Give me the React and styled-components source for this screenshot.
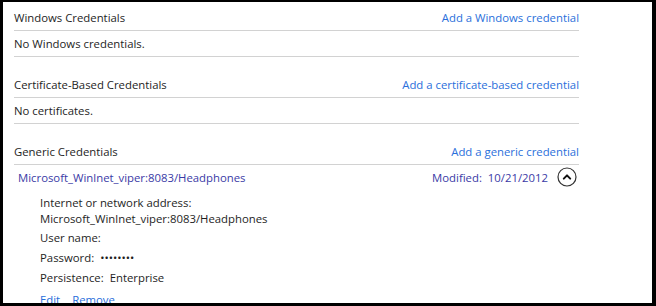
import React from 'react'
import { styled, createGlobalStyle } from 'styled-components'

const Global = createGlobalStyle`
  html, body {
    margin: 0;
    padding: 0;
    background: #000;
  }
  body {
    font-family: "Open Sans", "Noto Sans", sans-serif;
    font-size: 11.35px;
    color: #1e1e1e;
  }
`

const Frame = styled.div`
  width: 656px;
  height: 306px;
  box-sizing: border-box;
  padding: 2px 4px 3px 3px;
  background: #000;
`

const Panel = styled.div`
  height: 100%;
  background: #fff;
  overflow: hidden;
  padding: 3px 0 0 11px;
  box-sizing: border-box;
`

const Content = styled.div`
  width: 565px;
`

const Section = styled.section`
  & + & {
    margin-top: 15px;
  }
`

const Row = styled.div`
  display: flex;
  align-items: center;
  justify-content: space-between;
  height: 25px;
  border-bottom: 1px solid #d2d2d2;
`

const Link = styled.a`
  color: #2a6fdb;
  text-decoration: none;
  cursor: pointer;
`

const Item = styled.div`
  display: flex;
  align-items: center;
  justify-content: space-between;
  height: 24px;
  padding: 0 2px 0 4px;
  color: #3a3aa6;
`

const Meta = styled.div`
  display: flex;
  align-items: center;
  gap: 9px;
`

const Details = styled.div`
  padding: 6px 0 0 26px;
  line-height: 16px;
`

const Field = styled.div`
  margin-top: ${p => p.$gap || 0}px;
`

const Value = styled.span`
  margin-left: 6px;
`

const Actions = styled.div`
  margin-top: 6px;
  display: flex;
  gap: 12px;
`

const Toggle = () => (
  <svg width="20" height="20" viewBox="0 0 20 20">
    <circle cx="10" cy="10" r="9" fill="none" stroke="#333" strokeWidth="1.2" />
    <path d="M6.8 11.6 L10 8.4 L13.2 11.6" fill="none" stroke="#111" strokeWidth="2" strokeLinecap="round" strokeLinejoin="round" />
  </svg>
)

const Group = ({ title, action, children }) => (
  <Section>
    <Row>
      <span>{title}</span>
      <Link>{action}</Link>
    </Row>
    {children}
  </Section>
)

export default function App() {
  return (
    <Frame>
      <Global />
      <Panel>
        <Content>
          <Group title="Windows Credentials" action="Add a Windows credential">
            <Row>No Windows credentials.</Row>
          </Group>
          <Group title="Certificate-Based Credentials" action="Add a certificate-based credential">
            <Row>No certificates.</Row>
          </Group>
          <Group title="Generic Credentials" action="Add a generic credential">
            <Item>
              <span>Microsoft_Winlnet_viper:8083/Headphones</span>
              <Meta>
                <span>Modified:&nbsp; 10/21/2012</span>
                <Toggle />
              </Meta>
            </Item>
            <Details>
              <Field>
                Internet or network address:<br />
                Microsoft_Winlnet_viper:8083/Headphones
              </Field>
              <Field $gap={3}>User name:</Field>
              <Field $gap={4}>Password:<Value>••••••••</Value></Field>
              <Field $gap={4}>Persistence:<Value>Enterprise</Value></Field>
              <Actions>
                <Link>Edit</Link>
                <Link>Remove</Link>
              </Actions>
            </Details>
          </Group>
        </Content>
      </Panel>
    </Frame>
  )
}
